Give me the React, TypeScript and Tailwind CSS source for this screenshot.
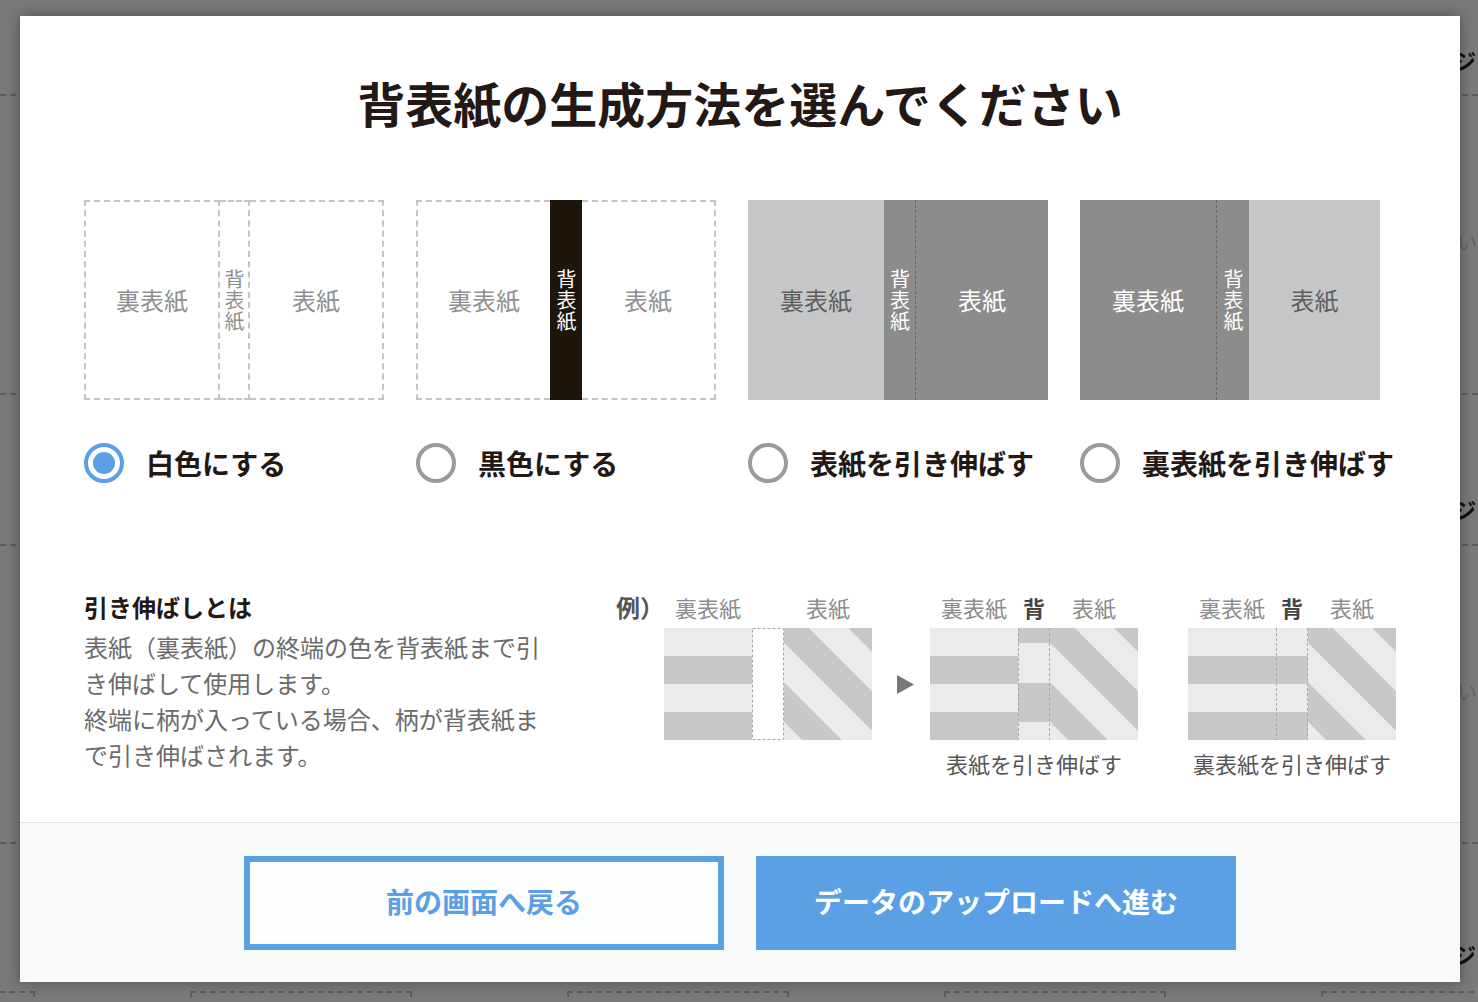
import React, { useState } from "react";

const LIGHT = "#ebebeb";
const GRAY = "#c8c8c8";

function SpineText({ className }: { className: string }) {
  return (
    <div className={"text-[20px] leading-[20px] tracking-[1px] [writing-mode:vertical-rl] " + className}>
      背表紙
    </div>
  );
}

function CoverWhite() {
  return (
    <div className="flex h-[200px] w-[300px]">
      <div className="flex w-[136px] items-center justify-center border-2 border-dashed border-[#c4c4c4] text-[24px] text-[#8f8f8f]">
        裏表紙
      </div>
      <div className="flex w-[30px] items-center justify-center border-y-2 border-r-2 border-dashed border-[#c4c4c4]">
        <SpineText className="text-[#8f8f8f]" />
      </div>
      <div className="flex flex-1 items-center justify-center border-y-2 border-r-2 border-dashed border-[#c4c4c4] text-[24px] text-[#8f8f8f]">
        表紙
      </div>
    </div>
  );
}

function CoverBlack() {
  return (
    <div className="flex h-[200px] w-[300px]">
      <div className="flex w-[134px] items-center justify-center border-y-2 border-l-2 border-dashed border-[#c4c4c4] text-[24px] text-[#8f8f8f]">
        裏表紙
      </div>
      <div className="flex w-[32px] items-center justify-center bg-[#1e150b]">
        <SpineText className="text-white" />
      </div>
      <div className="flex flex-1 items-center justify-center border-y-2 border-r-2 border-dashed border-[#c4c4c4] text-[24px] text-[#8f8f8f]">
        表紙
      </div>
    </div>
  );
}

function CoverFront() {
  return (
    <div className="flex h-[200px] w-[300px]">
      <div className="flex w-[136px] items-center justify-center bg-[#c6c7c9] text-[24px] text-[#5e5e5e]">裏表紙</div>
      <div className="flex w-[32px] items-center justify-center border-r border-dashed border-[#666] bg-[#8c8c8c]">
        <SpineText className="text-white" />
      </div>
      <div className="flex flex-1 items-center justify-center bg-[#8c8c8c] text-[24px] text-white">表紙</div>
    </div>
  );
}

function CoverBack() {
  return (
    <div className="flex h-[200px] w-[300px]">
      <div className="flex w-[137px] items-center justify-center border-r border-dashed border-[#666] bg-[#8c8c8c] text-[24px] text-white">
        裏表紙
      </div>
      <div className="flex w-[32px] items-center justify-center bg-[#8c8c8c]">
        <SpineText className="text-white" />
      </div>
      <div className="flex flex-1 items-center justify-center bg-[#c6c7c9] text-[24px] text-[#5e5e5e]">表紙</div>
    </div>
  );
}

// example pattern diagram: back 0-88, spine 88-120, front 120-208
function Diagram({ mode, id }: { mode: "none" | "front" | "back"; id: string }) {
  const diag = [-153, -74, 5, 84];
  const backW = mode === "back" ? 120 : 88;
  return (
    <svg width="208" height="112" viewBox="0 0 208 112" className="block">
      <defs>
        <clipPath id={id}>
          <rect x="120" y="0" width="88" height="112" />
        </clipPath>
      </defs>
      {/* back: horizontal stripes */}
      <rect x="0" y="0" width={backW} height="28" fill={LIGHT} />
      <rect x="0" y="28" width={backW} height="28" fill={GRAY} />
      <rect x="0" y="56" width={backW} height="28" fill={LIGHT} />
      <rect x="0" y="84" width={backW} height="28" fill={GRAY} />
      {/* front: diagonal stripes */}
      <g clipPath={`url(#${id})`}>
        <rect x="120" y="0" width="88" height="112" fill={LIGHT} />
        {diag.map((c) => (
          <line key={c} x1={120 + c - 40} y1={-40} x2={120 + c + 160} y2={160} stroke={GRAY} strokeWidth="28" />
        ))}
      </g>
      {mode === "front" && (
        <g>
          <rect x="88" y="0" width="32" height="15" fill={GRAY} />
          <rect x="88" y="15" width="32" height="40" fill={LIGHT} />
          <rect x="88" y="55" width="32" height="39" fill={GRAY} />
          <rect x="88" y="94" width="32" height="18" fill={LIGHT} />
        </g>
      )}
      {mode === "none" ? (
        <rect x="88.5" y="0.5" width="31" height="111" fill="#fff" stroke="#a9a9a9" strokeDasharray="3 2" />
      ) : (
        <g stroke="#a9a9a9" strokeDasharray="3 2">
          <line x1="88.5" y1="0" x2="88.5" y2="112" />
          <line x1="119.5" y1="0" x2="119.5" y2="112" />
        </g>
      )}
    </svg>
  );
}

function Labels({ spine }: { spine: boolean }) {
  return (
    <div className="flex h-[36px] items-center text-[22px] leading-[36px]">
      <div className="w-[88px] text-center text-[#8c8c8c]">裏表紙</div>
      <div className="w-[32px] text-center font-bold text-[#444]">{spine ? "背" : ""}</div>
      <div className="w-[88px] text-center text-[#8c8c8c]">表紙</div>
    </div>
  );
}

function Radio({ checked }: { checked: boolean }) {
  return (
    <span
      className={
        "flex h-10 w-10 shrink-0 items-center justify-center rounded-full border-4 " +
        (checked ? "border-[#5b9fe4]" : "border-[#9b9b9b]")
      }
    >
      {checked && <span className="h-[22px] w-[22px] rounded-full bg-[#5b9fe4]" />}
    </span>
  );
}

const options = ["白色にする", "黒色にする", "表紙を引き伸ばす", "裏表紙を引き伸ばす"];

function BackgroundPage() {
  return (
    <div className="h-[1002px] overflow-hidden bg-white">
      <div className="relative h-[96px] border-b-2 border-dashed border-[#c0c0c0]">
        <span className="absolute right-[2px] top-[46px] text-[22px] font-bold leading-[28px] text-[#222]">ページ</span>
      </div>
      <div className="relative h-[299px] border-b-2 border-dashed border-[#c0c0c0]">
        <span className="absolute right-[1px] top-[132px] text-[20px] leading-[28px] text-[#d2d2d2]">したい</span>
      </div>
      <div className="relative h-[151px] border-b-2 border-dashed border-[#c0c0c0]">
        <span className="absolute right-[2px] top-[100px] text-[22px] font-bold leading-[28px] text-[#222]">ページ</span>
      </div>
      <div className="relative h-[298px] border-b-2 border-dashed border-[#c0c0c0]">
        <span className="absolute right-[1px] top-[132px] text-[20px] leading-[28px] text-[#d2d2d2]">したい</span>
      </div>
      <div className="relative h-[147px]">
        <span className="absolute right-[2px] top-[96px] text-[22px] font-bold leading-[28px] text-[#222]">ページ</span>
      </div>
      <div className="ml-[-187px] flex gap-[155px]">
        {[0, 1, 2, 3, 4, 5].map((i) => (
          <div key={i} className="h-[40px] w-[222px] shrink-0 border-x-2 border-t-2 border-dashed border-[#c0c0c0]" />
        ))}
      </div>
    </div>
  );
}

export default function App() {
  const [selected, setSelected] = useState(0);

  return (
    <div className="relative h-[1002px] w-full overflow-hidden font-['Noto_Sans_CJK_JP','Noto_Sans',sans-serif]">
      <BackgroundPage />

      {/* overlay + modal */}
      <div className="absolute inset-0 flex bg-black/[0.52] pl-[20px] pt-[16px]">
        <div className="flex h-[966px] w-[1440px] flex-col bg-white shadow-[0_0_14px_rgba(0,0,0,0.35)]">
          <div className="flex-1">
            <h1 className="pt-[56px] text-center text-[48px] font-bold leading-[60px] text-[#231815]">
              背表紙の生成方法を選んでください
            </h1>

            {/* cover samples */}
            <div className="mt-[68px] flex gap-8 pl-[64px]">
              <CoverWhite />
              <CoverBlack />
              <CoverFront />
              <CoverBack />
            </div>

            {/* radio options */}
            <div className="mt-[43px] flex gap-8 pl-[64px]">
              {options.map((label, i) => (
                <button
                  key={label}
                  onClick={() => setSelected(i)}
                  className="flex w-[300px] items-center gap-[22px] text-left"
                >
                  <Radio checked={selected === i} />
                  <span className="whitespace-nowrap text-[28px] font-bold leading-[40px] text-[#231815]">{label}</span>
                </button>
              ))}
            </div>

            {/* explanation */}
            <div className="mt-[106px] flex pl-[64px]">
              <div className="w-[532px]">
                <h2 className="text-[24px] font-bold leading-[36px] text-[#231815]">引き伸ばしとは</h2>
                <p className="mt-[4px] w-[460px] text-[24px] leading-[36px] text-[#6b6b6b]">
                  表紙（裏表紙）の終端の色を背表紙まで引き伸ばして使用します。
                  <br />
                  終端に柄が入っている場合、柄が背表紙まで引き伸ばされます。
                </p>
              </div>

              <div className="flex">
                <div className="w-[48px] text-[24px] font-bold leading-[36px] text-[#555]">例）</div>

                <div className="flex flex-col">
                  <Labels spine={false} />
                  <div className="mt-[3px]">
                    <Diagram mode="none" id="d1" />
                  </div>
                </div>

                <div className="mt-[39px] flex h-[112px] w-[58px] items-center justify-center pl-[8px]">
                  <svg width="17" height="19" viewBox="0 0 17 19">
                    <polygon points="0,0 17,9.5 0,19" fill="#777" />
                  </svg>
                </div>

                <div className="flex flex-col">
                  <Labels spine={true} />
                  <div className="mt-[3px]">
                    <Diagram mode="front" id="d2" />
                  </div>
                  <div className="mt-[5px] text-center text-[22px] leading-[36px] text-[#555]">表紙を引き伸ばす</div>
                </div>

                <div className="ml-[50px] flex flex-col">
                  <Labels spine={true} />
                  <div className="mt-[3px]">
                    <Diagram mode="back" id="d3" />
                  </div>
                  <div className="mt-[5px] text-center text-[22px] leading-[36px] text-[#555]">裏表紙を引き伸ばす</div>
                </div>
              </div>
            </div>
          </div>

          {/* footer */}
          <div className="flex h-[160px] justify-center gap-8 border-t border-[#e2e4e4] bg-[#f8fafa] pt-[33px]">
            <button className="h-[94px] w-[480px] border-[6px] border-[#5b9fe4] bg-[#fcfdfd] pb-[5px] text-[28px] font-bold text-[#5b9fe4]">
              前の画面へ戻る
            </button>
            <button className="h-[94px] w-[480px] bg-[#5b9fe4] pb-[5px] text-[28px] font-bold text-white">
              データのアップロードへ進む
            </button>
          </div>
        </div>
      </div>
    </div>
  );
}
